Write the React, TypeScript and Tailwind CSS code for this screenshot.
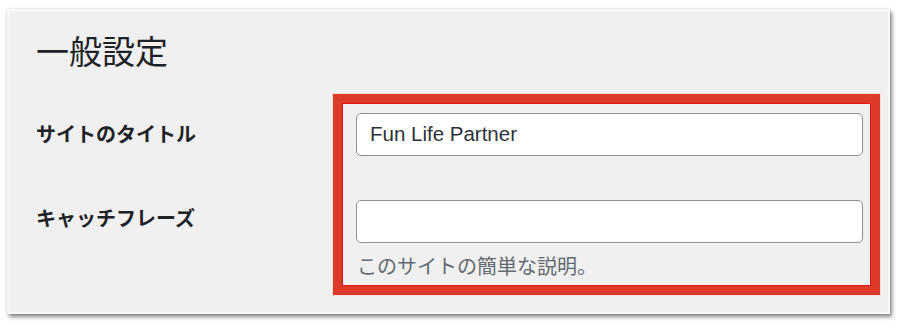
const jp = "font-['Liberation_Sans','Noto_Sans_CJK_JP',sans-serif]";

const Field = ({ value }: { value?: string }) => (
  <div className="flex h-[43px] items-center rounded-[5px] border border-[#8c8f94] bg-white pl-[13px] text-[20.5px] text-[#2c3338]">
    {value}
  </div>
);

export default function App() {
  return (
    <div className={`h-[328px] w-[900px] bg-white pl-[7px] pt-[9px] ${jp}`}>
      <div className="h-[305px] w-[883px] border-2 border-[#f9f9f9] bg-[#f0f0f1] pl-[27px] shadow-[2px_3px_4px_rgba(0,0,0,0.45),0_0_3px_rgba(0,0,0,0.15)]">
        <h1 className="pt-[22px] text-[33px] leading-[40px] text-[#1d2327]">一般設定</h1>
        <div className="mt-[21px] flex">
          <div className="flex w-[297px] flex-col pt-[27px] text-[20px] font-semibold leading-[28px] text-[#1d2327]">
            <span>サイトのタイトル</span>
            <span className="mt-[56px]">キャッチフレーズ</span>
          </div>
          <div className="h-[201px] w-[547px] border-[9px] border-[#dd3a29] pl-[14px] pr-[8px] pt-[10px] shadow-[inset_0_0_0_1px_#e3161a,0_0_0_1px_#f6dcd8]">
            <Field value="Fun Life Partner" />
            <div className="mt-[44px]">
              <Field />
            </div>
            <p className="mt-[11px] pl-[1px] text-[20px] leading-[26px] text-[#646970]">
              このサイトの簡単な説明。
            </p>
          </div>
        </div>
      </div>
    </div>
  );
}
